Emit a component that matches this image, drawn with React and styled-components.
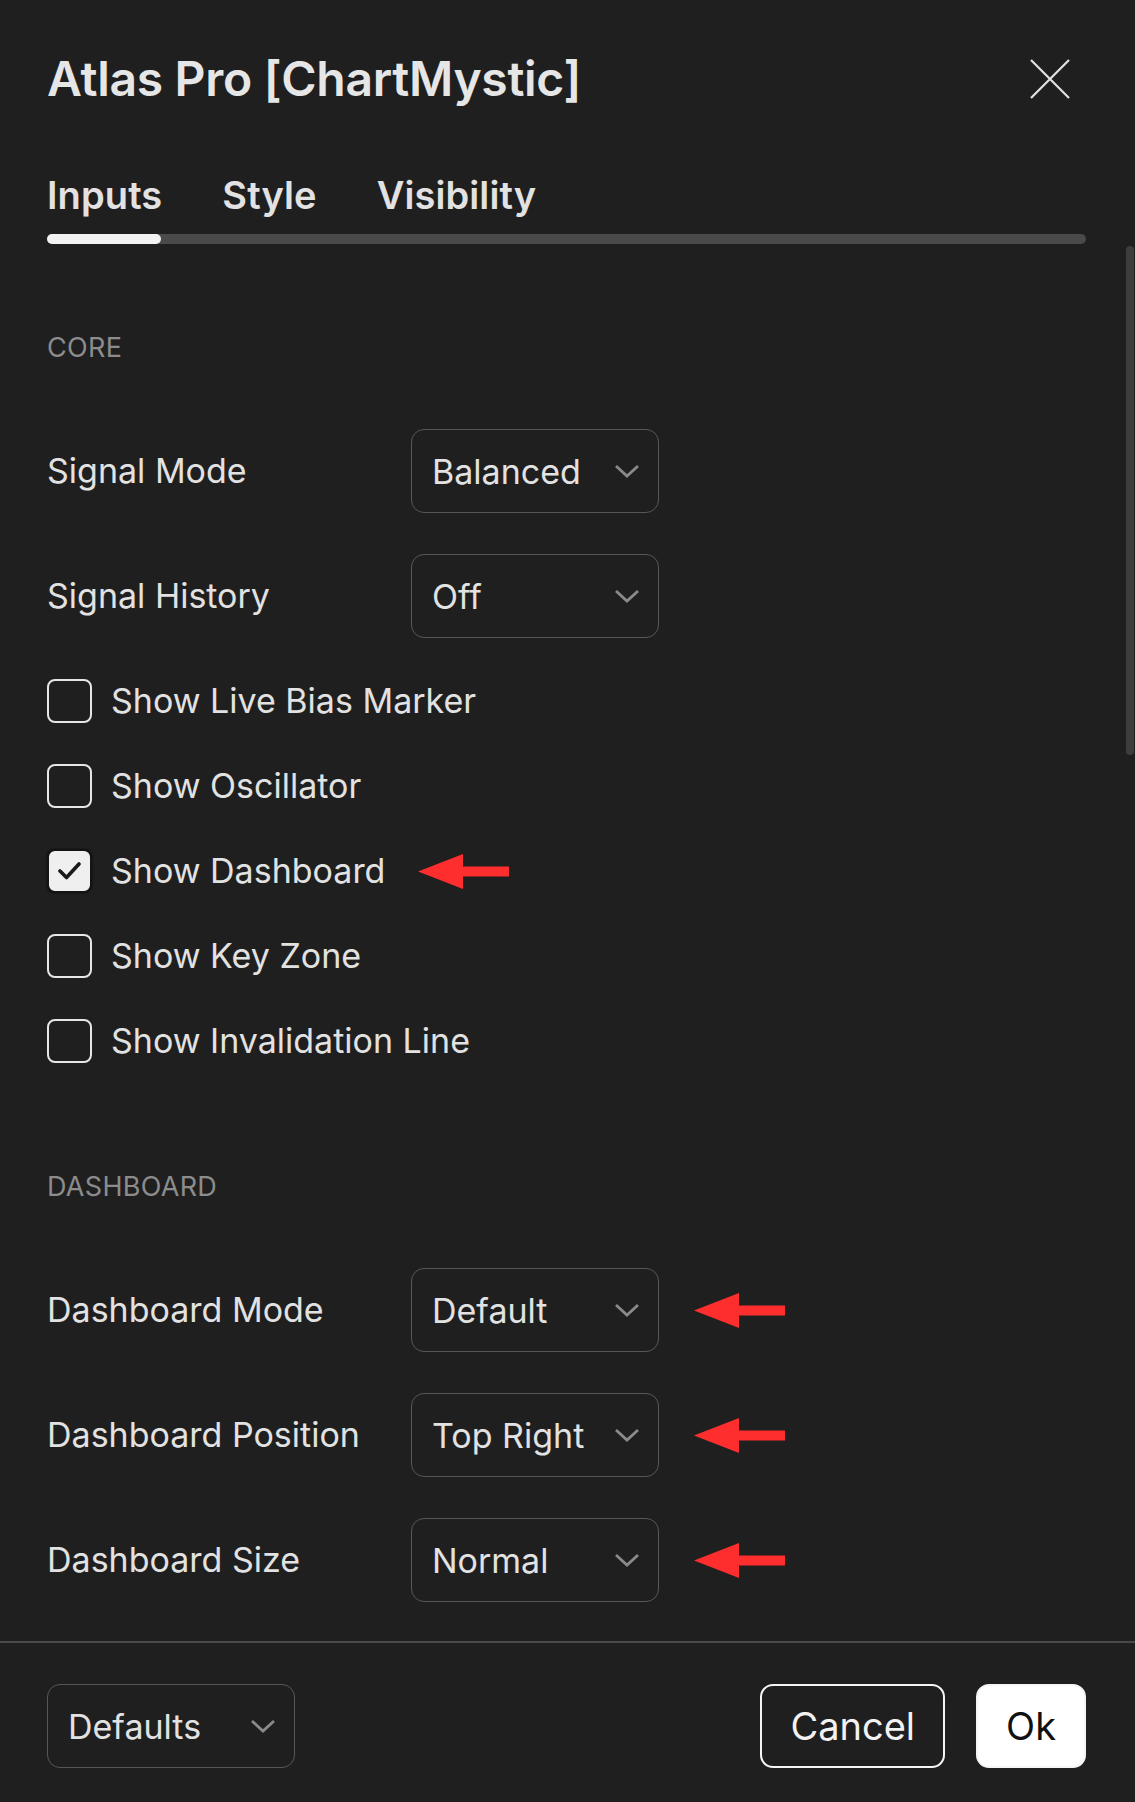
import styled, { createGlobalStyle } from 'styled-components';

const GlobalStyle = createGlobalStyle`
	html, body {
		margin: 0;
		padding: 0;
		background: #1f1f1f;
	}

	body {
		font-family: 'Inter', 'Liberation Sans', sans-serif;
		color: #e4e4e4;
	}
`;

const Page = styled.div`
	display: flex;
	flex-direction: column;
	height: 100vh;
	background: #1f1f1f;
	overflow: hidden;
`;

const Header = styled.div`
	display: flex;
	align-items: center;
	justify-content: space-between;
	height: 78px;
	padding: 40px 49px 0 47px;
`;

const Title = styled.h1`
	margin: 0;
	font-size: 48px;
	line-height: 60px;
	font-weight: 600;
	color: #e6e6e6;
	letter-spacing: -0.3px;
`;

const CloseButton = styled.button`
	display: flex;
	align-items: center;
	justify-content: center;
	width: 72px;
	height: 72px;
	padding: 0;
	border: 0;
	background: none;
	cursor: pointer;
`;

const Tabs = styled.div`
	margin-top: 55px;
	padding: 0 49px 0 47px;
`;

const TabList = styled.div`
	display: flex;
	gap: 60px;
`;

const Tab = styled.div`
	font-size: 38px;
	line-height: 44px;
	font-weight: 600;
	color: #e2e2e2;
	letter-spacing: 0.1px;
`;

const TabTrack = styled.div`
	margin-top: 17px;
	height: 10px;
	border-radius: 5px;
	background: #4a4a4a;
	display: flex;
`;

const TabIndicator = styled.div`
	width: 114px;
	border-radius: 5px;
	background: #f2f2f2;
`;

const ScrollArea = styled.div`
	position: relative;
	flex: 1;
	overflow: hidden;
`;

const Content = styled.div`
	padding: 90px 49px 0 47px;
`;

const Section = styled.section`
	& + & {
		margin-top: 110px;
	}
`;

const SectionTitle = styled.div`
	font-size: 27px;
	line-height: 28px;
	font-weight: 400;
	color: #8c8c8c;
	letter-spacing: 0.3px;
	margin-bottom: 67px;
`;

const Fields = styled.div`
	display: flex;
	flex-direction: column;
	gap: 41px;
`;

const Row = styled.div`
	display: flex;
	align-items: center;
	height: ${({ $tall }) => ($tall ? '84px' : '44px')};
`;

const Label = styled.div`
	width: 364px;
	flex-shrink: 0;
	font-size: 34px;
	line-height: 44px;
	color: #e2e2e2;
`;

const SelectBox = styled.div`
	box-sizing: border-box;
	display: flex;
	align-items: center;
	justify-content: space-between;
	width: 248px;
	height: 84px;
	padding: 0 18px 0 20px;
	border: 1.5px solid #575757;
	border-radius: 13px;
	font-size: 34px;
	color: #e2e2e2;
`;

const CheckLabel = styled.label`
	display: flex;
	align-items: center;
	gap: 19px;
	font-size: 34px;
	line-height: 44px;
	color: #e2e2e2;
`;

const Box = styled.span`
	box-sizing: border-box;
	display: flex;
	align-items: center;
	justify-content: center;
	width: 45px;
	height: 44px;
	border-radius: 8px;
	border: 2px solid ${({ $checked }) => ($checked ? '#141414' : '#e6e6e6')};
	background: ${({ $checked }) => ($checked ? '#efefef' : 'transparent')};
	box-shadow: ${({ $checked }) => ($checked ? '0 0 2px rgba(0,0,0,0.8)' : 'none')};
`;

const Pointer = styled.svg`
	flex-shrink: 0;
	margin-left: ${({ $offset }) => $offset}px;
`;

const ScrollThumb = styled.div`
	position: absolute;
	top: 2px;
	right: 1px;
	width: 8px;
	height: 509px;
	border-radius: 4px;
	background: #3d3d3d;
`;

const Footer = styled.div`
	display: flex;
	align-items: center;
	justify-content: space-between;
	border-top: 2px solid #4a4a4a;
	padding: 41px 49px 34px 47px;
`;

const Actions = styled.div`
	display: flex;
	gap: 31px;
`;

const Button = styled.button`
	box-sizing: border-box;
	height: 84px;
	padding: 0 28px;
	border-radius: 13px;
	font-family: inherit;
	font-size: 38px;
	font-weight: 400;
	border: 2px solid #f5f5f5;
	background: ${({ $primary }) => ($primary ? '#ffffff' : 'transparent')};
	color: ${({ $primary }) => ($primary ? '#111111' : '#f2f2f2')};
	cursor: pointer;
`;

const Chevron = () => (
	<svg width="26" height="14" viewBox="0 0 26 14" fill="none">
		<path d="M2 2 L13 12 L24 2" stroke="#8a8a8a" strokeWidth="2.8" />
	</svg>
);

const Arrow = ({ offset }) => (
	<Pointer $offset={offset} width="91" height="35" viewBox="0 0 91 35">
		<polygon points="0,17.5 45,0 45,12.5 91,12.5 91,22.5 45,22.5 45,35" fill="#fe2e2e" />
	</Pointer>
);

const Select = ({ value }) => (
	<SelectBox>
		<span>{value}</span>
		<Chevron />
	</SelectBox>
);

const SelectField = ({ label, value, marked }) => (
	<Row $tall>
		<Label>{label}</Label>
		<Select value={value} />
		{marked && <Arrow offset={35} />}
	</Row>
);

const CheckField = ({ label, checked, marked }) => (
	<Row>
		<CheckLabel>
			<Box $checked={checked}>
				{checked && (
					<svg width="24" height="20" viewBox="0 0 24 20" fill="none">
						<path
							d="M2 10 L8.5 16.5 L21 3"
							stroke="#1a1a1a"
							strokeWidth="3.6"
							strokeLinecap="round"
							strokeLinejoin="round"
						/>
					</svg>
				)}
			</Box>
			{label}
		</CheckLabel>
		{marked && <Arrow offset={33} />}
	</Row>
);

export default function App() {
	return (
		<>
			<GlobalStyle />
			<Page>
				<Header>
					<Title>Atlas Pro [ChartMystic]</Title>
					<CloseButton aria-label="Close">
						<svg width="40" height="40" viewBox="0 0 40 40">
							<path d="M1 1 L39 39 M39 1 L1 39" stroke="#e2e2e2" strokeWidth="2.2" />
						</svg>
					</CloseButton>
				</Header>

				<Tabs>
					<TabList>
						<Tab>Inputs</Tab>
						<Tab>Style</Tab>
						<Tab>Visibility</Tab>
					</TabList>
					<TabTrack>
						<TabIndicator />
					</TabTrack>
				</Tabs>

				<ScrollArea>
					<Content>
						<Section>
							<SectionTitle>CORE</SectionTitle>
							<Fields>
								<SelectField label="Signal Mode" value="Balanced" />
								<SelectField label="Signal History" value="Off" />
								<CheckField label="Show Live Bias Marker" />
								<CheckField label="Show Oscillator" />
								<CheckField label="Show Dashboard" checked marked />
								<CheckField label="Show Key Zone" />
								<CheckField label="Show Invalidation Line" />
							</Fields>
						</Section>

						<Section>
							<SectionTitle>DASHBOARD</SectionTitle>
							<Fields>
								<SelectField label="Dashboard Mode" value="Default" marked />
								<SelectField label="Dashboard Position" value="Top Right" marked />
								<SelectField label="Dashboard Size" value="Normal" marked />
							</Fields>
						</Section>
					</Content>
					<ScrollThumb />
				</ScrollArea>

				<Footer>
					<Select value="Defaults" />
					<Actions>
						<Button>Cancel</Button>
						<Button $primary>Ok</Button>
					</Actions>
				</Footer>
			</Page>
		</>
	);
}
